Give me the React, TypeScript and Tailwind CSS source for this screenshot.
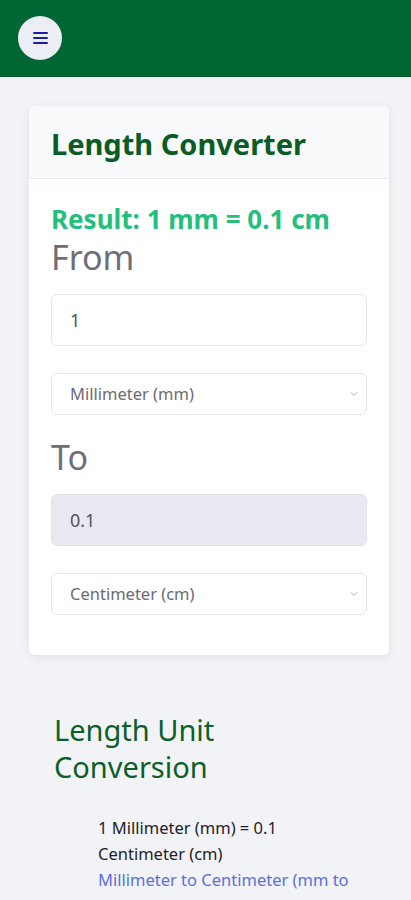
import { ChevronDown } from 'lucide-react';

const font = { fontFamily: '"Noto Sans", "Open Sans", sans-serif' };

function UnitSelect({ label }: { label: string }) {
  return (
    <div className="flex h-[42px] items-center justify-between rounded-md border border-[#e4e5ea] bg-white pl-[18px] pr-[6px]">
      <span className="text-[16.5px] text-[#6b6b73]">{label}</span>
      <ChevronDown className="h-3 w-3 text-[#9a9aa2]" strokeWidth={1.5} />
    </div>
  );
}

export default function App() {
  return (
    <div className="min-h-[900px] bg-[#f2f3f7]" style={font}>
      <header className="flex h-[77px] items-center border-b border-[#0b5a28] bg-[#006633] px-[18px]">
        <button className="flex h-[44px] w-[44px] items-center justify-center rounded-full bg-[#ecedf5]">
          <span className="flex w-[15px] flex-col gap-[3px]">
            <span className="h-[2px] rounded bg-[#1c1ca6]" />
            <span className="h-[2px] rounded bg-[#1c1ca6]" />
            <span className="h-[2px] rounded bg-[#1c1ca6]" />
          </span>
        </button>
      </header>

      <main className="pl-[29px] pr-[22px] pt-[29px]">
        <div className="overflow-hidden rounded-md bg-white shadow-[0_2px_10px_rgba(0,0,0,0.08)]">
          <div className="flex h-[73px] items-center border-b border-[#e9eaee] bg-[#f8f9fa] px-[22px] pt-[4px]">
            <h1 className="text-[29px] font-bold text-[#0b5c24]">Length Converter</h1>
          </div>
          <div className="px-[22px] pb-[40px] pt-[24px]">
            <p className="text-[26px] font-bold leading-[32px] text-[#22c07c]">Result: 1 mm = 0.1 cm</p>
            <p className="text-[34px] leading-[44px] text-[#6e6e78]">From</p>
            <div className="mt-[15px] flex h-[52px] items-center rounded-md border border-[#e4e5ea] bg-white px-[18px] text-[18px] text-[#55555c]">
              1
            </div>
            <div className="mt-[27px]">
              <UnitSelect label="Millimeter (mm)" />
            </div>
            <p className="mt-[20px] text-[34px] leading-[44px] text-[#6e6e78]">To</p>
            <div className="mt-[15px] flex h-[52px] items-center rounded-md border border-[#e1e2e9] bg-[#e9eaf1] px-[18px] text-[18px] text-[#55555c]">
              0.1
            </div>
            <div className="mt-[27px]">
              <UnitSelect label="Centimeter (cm)" />
            </div>
          </div>
        </div>

        <section className="pl-[25px] pr-[10px] pt-[56px]">
          <h2 className="text-[29px] leading-[37px] text-[#0d5e27]">
            Length Unit
            <br />
            Conversion
          </h2>
          <ul className="mt-[30px] pl-[44px] pr-[20px] text-[16.5px] leading-[26px]">
            <li className="text-[#222226]">1 Millimeter (mm) = 0.1 Centimeter (cm)</li>
            <li className="text-[#5b6fe0]">Millimeter to Centimeter (mm to cm) Conversion | Millimeter</li>
          </ul>
        </section>
      </main>
    </div>
  );
}
